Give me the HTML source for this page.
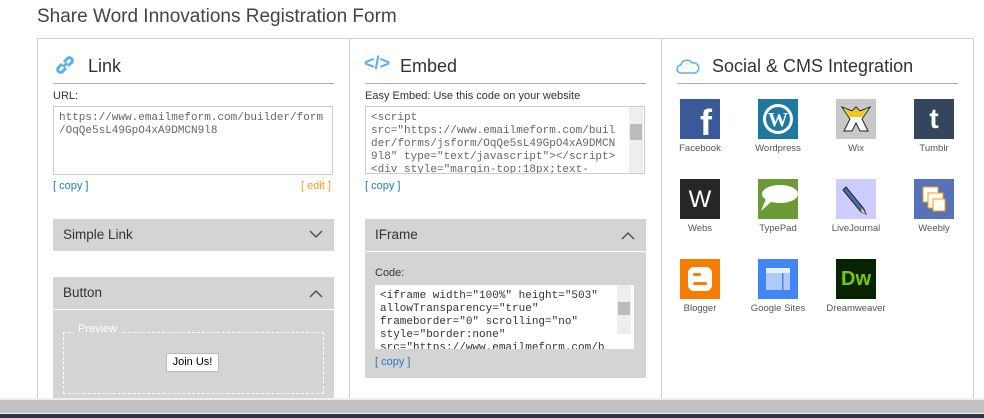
<!DOCTYPE html>
<html><head><meta charset="utf-8"><style>
*{box-sizing:border-box;margin:0;padding:0}
body{width:984px;height:418px;overflow:hidden;background:#fff;font-family:"Liberation Sans",sans-serif;color:#333;position:relative}
.a{position:absolute}
.title{left:37px;top:6px;font-size:19px;color:#444}
.box{left:37px;top:38px;width:937px;height:370px;border:1px solid #d0d0d0;border-bottom:none}
.vd{top:38px;width:1px;height:362px;background:#d0d0d0}
.h{font-size:18px;color:#333}
.ul{height:1px;background:#aaa}
.lbl{font-size:11px;color:#333}
.ta{border:1px solid #ccc;background:#fff;font-family:"Liberation Mono",monospace;font-size:11px;line-height:13px;color:#666;padding:5px 5px;overflow:hidden;white-space:pre}
.cp{font-size:11px;color:#1a7bc0}
.bar{background:#d4d4d4;font-size:13.5px;color:#333;padding-left:10px;line-height:32px}
.ic{width:40px;height:40px}
.il{font-size:9.5px;color:#555;width:78px;text-align:center}
.sb{background:#eee;width:14px}
</style></head><body>
<div class="a title">Share Word Innovations Registration Form</div>
<div class="a box"></div>
<div class="a vd" style="left:349px"></div>
<div class="a vd" style="left:661px"></div>

<svg class="a" style="left:53px;top:53px" width="24" height="24" viewBox="0 0 24 24" fill="none" stroke="#5ab0ef" stroke-width="3"><path d="M10 14 L14 10"/><path d="M9 11 L5 15 A3 3 0 0 0 9 19 L13 15"/><path d="M11 9 L15 5 A3 3 0 0 1 19 9 L15 13"/></svg>
<div class="a h" style="left:88px;top:56px">Link</div>
<div class="a ul" style="left:53px;top:83px;width:281px"></div>
<div class="a lbl" style="left:53px;top:90px">URL:</div>
<div class="a ta" style="left:53px;top:106px;width:280px;height:69px">https://www.emailmeform.com/builder/form
/OqQe5sL49GpO4xA9DMCN9l8</div>
<div class="a cp" style="left:53px;top:180px">[ copy ]</div>
<div class="a cp" style="left:301px;top:180px;color:#f39a1e">[ edit ]</div>
<div class="a bar" style="left:53px;top:219px;width:281px;height:32px">Simple Link</div>
<svg class="a" style="left:309px;top:230px" width="14" height="9"><path d="M1 1 L7 7 L13 1" fill="none" stroke="#444" stroke-width="1.3"/></svg>
<div class="a bar" style="left:53px;top:277px;width:281px;height:121px">Button</div>
<div class="a" style="left:53px;top:309px;width:281px;height:1px;background:#fff"></div>
<svg class="a" style="left:309px;top:289px" width="14" height="9"><path d="M1 8 L7 2 L13 8" fill="none" stroke="#444" stroke-width="1.3"/></svg>
<div class="a" style="left:63px;top:332px;width:261px;height:62px;border:1px dashed #fff"></div>
<div class="a" style="left:74px;top:323px;font-size:11px;color:#fff;background:#d4d4d4;padding:0 4px">Preview</div>
<div class="a" style="left:166px;top:353px;width:53px;height:19px;background:#fff;border:1px solid #bbb;font-size:11px;text-align:center;line-height:17px;color:#000">Join Us!</div>

<div class="a" style="left:364px;top:53px;font-size:18px;color:#5ab0ef;font-weight:bold">&lt;/&gt;</div>
<div class="a h" style="left:400px;top:56px">Embed</div>
<div class="a ul" style="left:365px;top:83px;width:281px"></div>
<div class="a lbl" style="left:365px;top:90px">Easy Embed: Use this code on your website</div>
<div class="a ta" style="left:365px;top:106px;width:280px;height:68px">&lt;script
src="https://www.emailmeform.com/buil
der/forms/jsform/OqQe5sL49GpO4xA9DMCN
9l8" type="text/javascript"&gt;&lt;/script&gt;
&lt;div style="margin-top:18px;text-</div>
<div class="a sb" style="left:629px;top:107px;height:66px"></div>
<div class="a" style="left:630px;top:124px;width:12px;height:16px;background:#bbb"></div>
<div class="a cp" style="left:365px;top:180px">[ copy ]</div>
<div class="a bar" style="left:365px;top:219px;width:281px;height:159px">IFrame</div>
<div class="a" style="left:365px;top:251px;width:281px;height:1px;background:#fff"></div>
<svg class="a" style="left:621px;top:231px" width="14" height="9"><path d="M1 8 L7 2 L13 8" fill="none" stroke="#444" stroke-width="1.3"/></svg>
<div class="a lbl" style="left:375px;top:267px">Code:</div>
<div class="a ta" style="left:375px;top:285px;width:259px;height:64px;border:none;color:#333">&lt;iframe width="100%" height="503"
allowTransparency="true"
frameborder="0" scrolling="no"
style="border:none"
src="https://www.emailmeform.com/b</div>
<div class="a sb" style="left:617px;top:285px;height:49px"></div>
<div class="a" style="left:618px;top:302px;width:12px;height:13px;background:#bbb"></div>
<div class="a cp" style="left:375px;top:356px">[ copy ]</div>

<svg class="a" style="left:676px;top:58px" width="24" height="16" viewBox="0 0 24 16"><path d="M5 15 A4 4 0 0 1 5 7 A6 6 0 0 1 16 5 A5 5 0 0 1 19 15 Z" fill="none" stroke="#5ab0ef" stroke-width="1.5"/></svg>
<div class="a h" style="left:712px;top:56px">Social &amp; CMS Integration</div>
<div class="a ul" style="left:677px;top:83px;width:281px"></div>

<div class="a ic" style="left:680px;top:99px;background:#3b5998;color:#fff;font:bold 36px 'Liberation Sans';text-align:right;padding-right:8px;line-height:48px;overflow:hidden">f</div>
<div class="a ic" style="left:758px;top:99px;background:#1e78a0"><svg width="40" height="40"><circle cx="20" cy="20" r="15" fill="#fff"/><circle cx="20" cy="20" r="12" fill="#1e78a0"/><text x="20" y="27" text-anchor="middle" font-family="Liberation Serif" font-weight="bold" font-size="20" fill="#fff">W</text></svg></div>
<div class="a ic" style="left:836px;top:99px;background:#c8c8c8"><svg width="40" height="40"><path d="M6 8 L16 12 L20 8 L24 12 L34 8 L26 20 L32 32 L24 32 L20 24 L16 32 L8 32 L14 20Z" fill="#fff" stroke="#222" stroke-width="1"/><path d="M8 9 L16 13 L20 9 L24 13 L32 9 L26 18 L14 18Z" fill="#f5c518"/></svg></div>
<div class="a ic" style="left:914px;top:99px;background:#34465d;color:#fff;font:bold 28px 'Liberation Sans';text-align:center;line-height:40px">t</div>
<div class="a ic" style="left:680px;top:179px;background:#262626;color:#fff;font:24px 'Liberation Sans';text-align:center;line-height:42px">W</div>
<div class="a ic" style="left:758px;top:179px;background:#6b9b37"><svg width="40" height="40"><ellipse cx="22" cy="15" rx="18" ry="9" fill="#fff"/><path d="M8 20 L3 32 L14 22Z" fill="#fff"/></svg></div>
<div class="a ic" style="left:836px;top:179px;background:#ccccff"><svg width="40" height="40"><path d="M10 8 L28 30 L30 35 L25 33 L7 11Z" fill="#4a6fa5" stroke="#223" stroke-width="1"/><path d="M26 29 L30 35 L25 33Z" fill="#f0c090"/></svg></div>
<div class="a ic" style="left:914px;top:179px;background:#5473b8"><svg width="40" height="40"><rect x="9" y="8" width="15" height="15" fill="#fff" stroke="#f90"/><rect x="14" y="14" width="15" height="15" fill="#fff" stroke="#f90"/><rect x="19" y="20" width="12" height="12" fill="#fff" stroke="#f90"/></svg></div>
<div class="a ic" style="left:680px;top:259px;background:#f57d00"><svg width="40" height="40"><rect x="8" y="8" width="24" height="24" rx="6" fill="#fff"/><rect x="13" y="14" width="8" height="3" rx="1.5" fill="#f57d00"/><rect x="13" y="23" width="14" height="3" rx="1.5" fill="#f57d00"/></svg></div>
<div class="a ic" style="left:758px;top:259px;background:#4285f4"><svg width="40" height="40"><rect x="8" y="9" width="24" height="22" fill="#aecbfa"/><rect x="8" y="9" width="24" height="5" fill="#e8f0fe"/><rect x="24" y="14" width="1.5" height="17" fill="#4285f4"/></svg></div>
<div class="a ic" style="left:836px;top:259px;background:#072401;color:#7ec600;font:bold 20px 'Liberation Sans';text-align:center;line-height:40px">Dw</div>
<div class="a il" style="left:661px;top:143px">Facebook</div>
<div class="a il" style="left:739px;top:143px">Wordpress</div>
<div class="a il" style="left:817px;top:143px">Wix</div>
<div class="a il" style="left:895px;top:143px">Tumblr</div>
<div class="a il" style="left:661px;top:223px">Webs</div>
<div class="a il" style="left:739px;top:223px">TypePad</div>
<div class="a il" style="left:817px;top:223px">LiveJournal</div>
<div class="a il" style="left:895px;top:223px">Weebly</div>
<div class="a il" style="left:661px;top:303px">Blogger</div>
<div class="a il" style="left:739px;top:303px">Google Sites</div>
<div class="a il" style="left:817px;top:303px">Dreamweaver</div>

<div class="a" style="left:0;top:398px;width:984px;height:2px;background:#eee"></div>
<div class="a" style="left:0;top:400px;width:984px;height:13px;background:#c2c2c2"></div>
<div class="a" style="left:0;top:413px;width:984px;height:1px;background:#eee"></div>
<div class="a" style="left:0;top:414px;width:984px;height:4px;background:#1c3a52"></div>
</body></html>
